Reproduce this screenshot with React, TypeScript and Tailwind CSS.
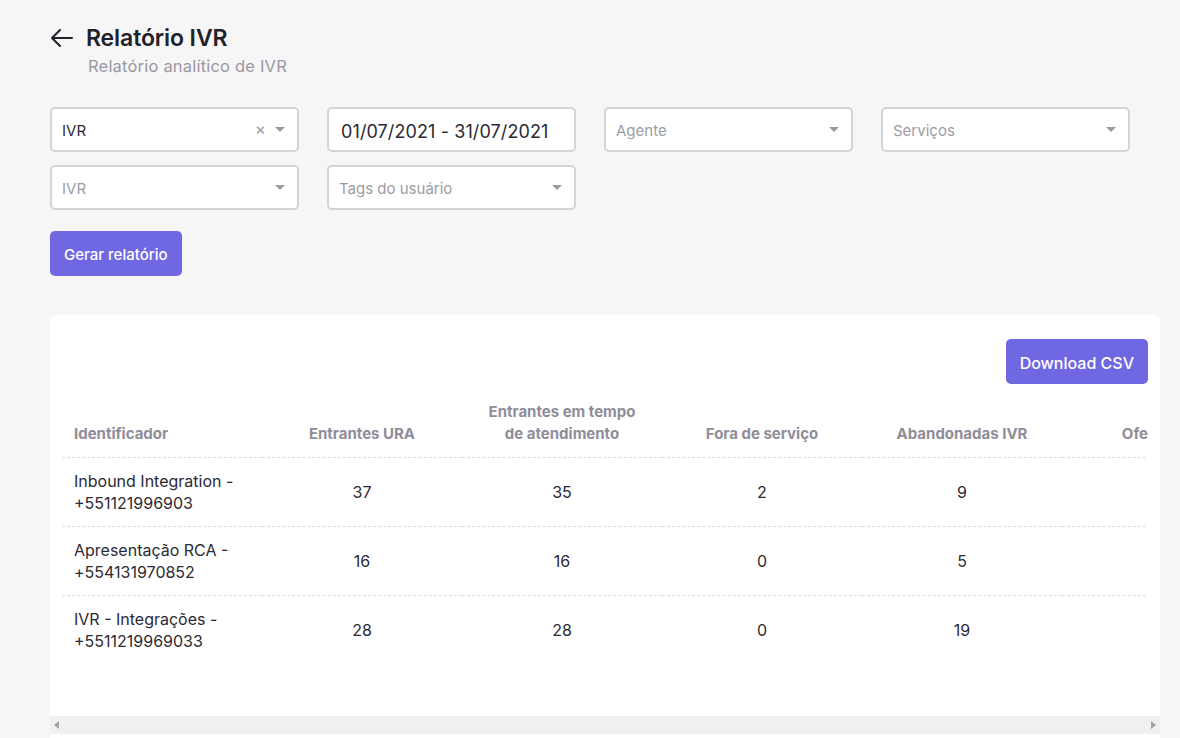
import React from "react";

const rows = [
  { id: "Inbound Integration - +551121996903", ura: 37, tempo: 35, fora: 2, aband: 9, ofe: 26 },
  { id: "Apresentação RCA - +554131970852", ura: 16, tempo: 16, fora: 0, aband: 5, ofe: 11 },
  { id: "IVR - Integrações - +5511219969033", ura: 28, tempo: 28, fora: 0, aband: 19, ofe: 9 },
];

function Caret() {
  return (
    <svg width="10" height="6" viewBox="0 0 10 6" className="shrink-0">
      <path d="M0 0 L10 0 L5 5 Z" fill="#9b9aa1" />
    </svg>
  );
}

function SelectBox({ label, value, clearable }: { label: string; value?: boolean; clearable?: boolean }) {
  return (
    <div className="h-[45px] bg-white border-2 border-[#d4d3d8] rounded-[5px] flex items-center pl-[10px] pr-[12px]">
      <span className={value ? "flex-1 pt-[3px] text-[15px] text-[#2b2a33]" : "flex-1 pt-[3px] text-[15px] text-[#9d9ca5]"}>{label}</span>
      {clearable && <span className="text-[#9b9aa1] text-[17px] mr-[9px] leading-none">×</span>}
      <Caret />
    </div>
  );
}

export default function App() {
  return (
    <div
      className="h-[738px] overflow-hidden bg-[#f6f6f6] text-[#2b2a33]"
      style={{ fontFamily: "Inter, 'Noto Sans', sans-serif" }}
    >
      <div className="pl-[50px] pt-[24px]">
        {/* Header */}
        <div className="flex items-center gap-[12px]">
          <svg width="24" height="20" viewBox="0 0 24 20" fill="none" stroke="#22212a" strokeWidth="2" strokeLinecap="round" strokeLinejoin="round">
            <path d="M22 10 H2 M10 2 L2 10 L10 18" />
          </svg>
          <h1 className="text-[23px] font-semibold tracking-[-0.1px] text-[#22212a] leading-[28px]">Relatório IVR</h1>
        </div>
        <p className="ml-[38px] mt-[3px] text-[16.5px] tracking-[0.2px] text-[#9a98a3] leading-[22px]">Relatório analítico de IVR</p>

        {/* Filters */}
        <div className="mt-[30px] grid grid-cols-[repeat(4,249px)] gap-x-[28px] gap-y-[13px]">
          <SelectBox label="IVR" value clearable />
          <div className="h-[45px] bg-white border-2 border-[#d4d3d8] rounded-[5px] flex items-center pl-[12px]">
            <span className="pt-[3px] text-[18px] text-[#2b2a33] tracking-[0.1px]">01/07/2021 - 31/07/2021</span>
          </div>
          <SelectBox label="Agente" />
          <SelectBox label="Serviços" />
          <SelectBox label="IVR" />
          <SelectBox label="Tags do usuário" />
        </div>

        <button className="mt-[21px] h-[45px] px-[14px] pt-[3px] rounded-[5px] bg-[#7068e2] text-white text-[15px] font-medium">
          Gerar relatório
        </button>

        {/* Card */}
        <div className="mt-[39px] w-[1110px] h-[440px] bg-white rounded-[6px] overflow-hidden flex flex-col">
          <div className="flex justify-end pt-[24px] pr-[12px]">
            <button className="h-[45px] px-[14px] pt-[3px] rounded-[5px] bg-[#7068e2] text-white text-[16px] font-medium">
              Download CSV
            </button>
          </div>
          <div className="mx-[12px] mt-[17px] overflow-hidden h-[315px]">
            <table className="border-collapse table-fixed w-[1400px]">
              <colgroup>
                <col className="w-[200px]" />
                <col className="w-[200px]" />
                <col className="w-[200px]" />
                <col className="w-[200px]" />
                <col className="w-[200px]" />
                <col className="w-[200px]" />
                <col className="w-[200px]" />
              </colgroup>
              <thead>
                <tr className="border-b border-dashed border-[#dcdce0] text-[15px] font-semibold text-[#8f8d99] leading-[22px]">
                  <th className="text-left align-bottom px-3 pb-[12px]">Identificador</th>
                  <th className="text-center align-bottom px-3 pb-[12px]">Entrantes URA</th>
                  <th className="text-center align-bottom px-[20px] pb-[12px]">Entrantes em tempo de atendimento</th>
                  <th className="text-center align-bottom px-3 pb-[12px]">Fora de serviço</th>
                  <th className="text-center align-bottom px-3 pb-[12px]">Abandonadas IVR</th>
                  <th className="text-center align-bottom px-3 pb-[12px]">Oferecidas</th>
                  <th className="text-center align-bottom px-3 pb-[12px]">Atendidas</th>
                </tr>
              </thead>
              <tbody className="text-[16px] text-[#2b2a33] leading-[22px]">
                {rows.map((r, i) => (
                  <tr key={r.id} className={i < rows.length - 1 ? "border-b border-dashed border-[#dcdce0]" : ""}>
                    <td className="px-3 py-[12px] h-[69px] text-left">{r.id}</td>
                    <td className="px-3 text-center">{r.ura}</td>
                    <td className="px-3 text-center">{r.tempo}</td>
                    <td className="px-3 text-center">{r.fora}</td>
                    <td className="px-3 text-center">{r.aband}</td>
                    <td className="px-3 text-center">{r.ofe}</td>
                    <td className="px-3 text-center">{r.tempo - r.aband}</td>
                  </tr>
                ))}
              </tbody>
            </table>
          </div>
          {/* scrollbar track */}
          <div className="h-[18px] bg-[#f0f0f0] flex items-center justify-between px-[4px]">
            <svg width="5" height="8" viewBox="0 0 5 8"><path d="M5 0 L0 4 L5 8 Z" fill="#a3a3a3" /></svg>
            <svg width="5" height="8" viewBox="0 0 5 8"><path d="M0 0 L5 4 L0 8 Z" fill="#a3a3a3" /></svg>
          </div>
        </div>
      </div>
    </div>
  );
}
